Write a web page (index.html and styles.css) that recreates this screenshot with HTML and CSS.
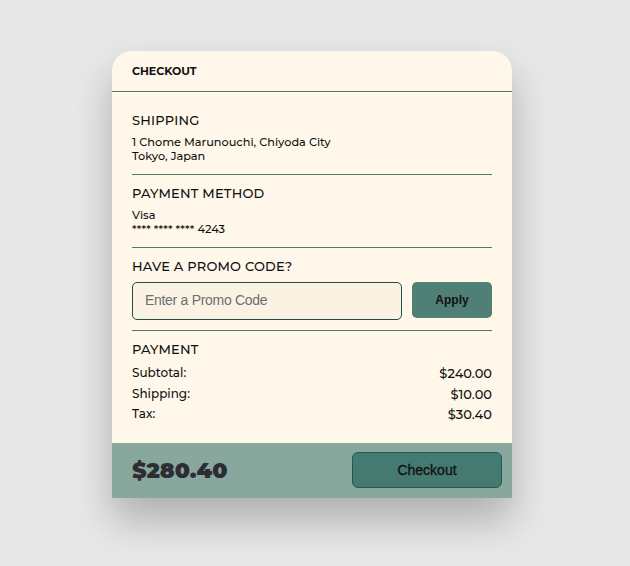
FILE: index.html
```html
<!DOCTYPE html>
<html>
<head>
<meta charset="utf-8">
<link rel="stylesheet" href="styles.css">
</head>
<body>
<div class="card">
  <div class="header">CHECKOUT</div>
  <div class="content">
    <section class="section first">
      <h2 class="title">SHIPPING</h2>
      <p class="text">1 Chome Marunouchi, Chiyoda City<br>Tokyo, Japan</p>
    </section>
    <section class="section">
      <h2 class="title">PAYMENT METHOD</h2>
      <p class="text">Visa<br>**** **** **** 4243</p>
    </section>
    <section class="section promo-section">
      <h2 class="title">HAVE A PROMO CODE?</h2>
      <div class="promo">
        <input class="promo-input" type="text" placeholder="Enter a Promo Code">
        <button class="apply">Apply</button>
      </div>
    </section>
    <section class="section last">
      <h2 class="title title-rows">PAYMENT</h2>
      <div class="row"><span>Subtotal:</span><span class="amt">$240.00</span></div>
      <div class="row"><span>Shipping:</span><span class="amt">$10.00</span></div>
      <div class="row"><span>Tax:</span><span class="amt">$30.40</span></div>
    </section>
  </div>
  <div class="footer">
    <span class="total">$280.40</span>
    <button class="checkout">Checkout</button>
  </div>
</div>
</body>
</html>
```
FILE: styles.css
```css
* { box-sizing: border-box; }
html, body { margin: 0; padding: 0; }
body {
  width: 630px;
  height: 566px;
  background: #e8e8e8;
  font-family: "Montserrat", "DejaVu Sans", sans-serif;
  color: #111;
  padding-top: 51px;
  overflow: hidden;
}
.card {
  width: 400px;
  margin: 0 0 0 112px;
  background: #fff8ea;
  border-radius: 20px 20px 0 0;
  box-shadow: 0 22px 40px rgba(0,0,0,0.25);
  overflow: hidden;
}
.header {
  height: 41px;
  padding: 0 20px 1px;
  display: flex;
  align-items: center;
  font-size: 11px;
  font-weight: bold;
  border-bottom: 1px solid #4a7a70;
}
.content { padding: 0 20px; }
.section {
  border-bottom: 1px solid #4a7a70;
  padding: 10px 0 11px;
}
.section.first { padding-top: 20px; }
.section.promo-section { padding-bottom: 10px; }
.section.last { border-bottom: none; padding-bottom: 18px; }
.title {
  margin: 0 0 7px;
  font-size: 13px;
  line-height: 16px;
  font-weight: 500;
  letter-spacing: 0.2px;
}
.title.title-rows { margin-bottom: 6px; }
.promo-section .title { margin-bottom: 8px; }
.text {
  margin: 0;
  font-size: 11.3px;
  font-weight: 500;
  line-height: 14px;
}
.promo {
  display: flex;
  gap: 10px;
  align-items: flex-start;
}
.promo-input {
  width: 270px;
  height: 38px;
  background: #faf3e3;
  border: 1px solid #1f4f47;
  border-radius: 5px;
  padding: 0 12px 2px;
  font-family: "Liberation Sans", Arial, sans-serif;
  font-size: 14px;
  letter-spacing: -0.3px;
  color: #333;
  outline: none;
}
.promo-input::placeholder { color: #6e6e6e; }
.apply {
  width: 80px;
  height: 36px;
  background: #4f7f75;
  border: none;
  border-radius: 5px;
  font-family: "Liberation Sans", Arial, sans-serif;
  font-weight: bold;
  font-size: 12px;
  color: #111;
}
.row {
  display: flex;
  justify-content: space-between;
  font-size: 12px;
  font-weight: 500;
  line-height: 20.5px;
}
.amt { font-size: 13px; }
.footer {
  height: 55px;
  background: #88a89e;
  display: flex;
  align-items: center;
  justify-content: space-between;
  padding: 0 10px 0 20px;
}
.total {
  font-size: 22px;
  font-weight: 900;
  color: #2d2d33;
}
.checkout {
  width: 150px;
  height: 36px;
  background: #447a70;
  border: 1px solid #1f5a52;
  border-radius: 6px;
  font-family: "Liberation Sans", Arial, sans-serif;
  font-size: 14px;
  font-weight: 400;
  -webkit-text-stroke: 0.3px #111;
  color: #111;
}
```
